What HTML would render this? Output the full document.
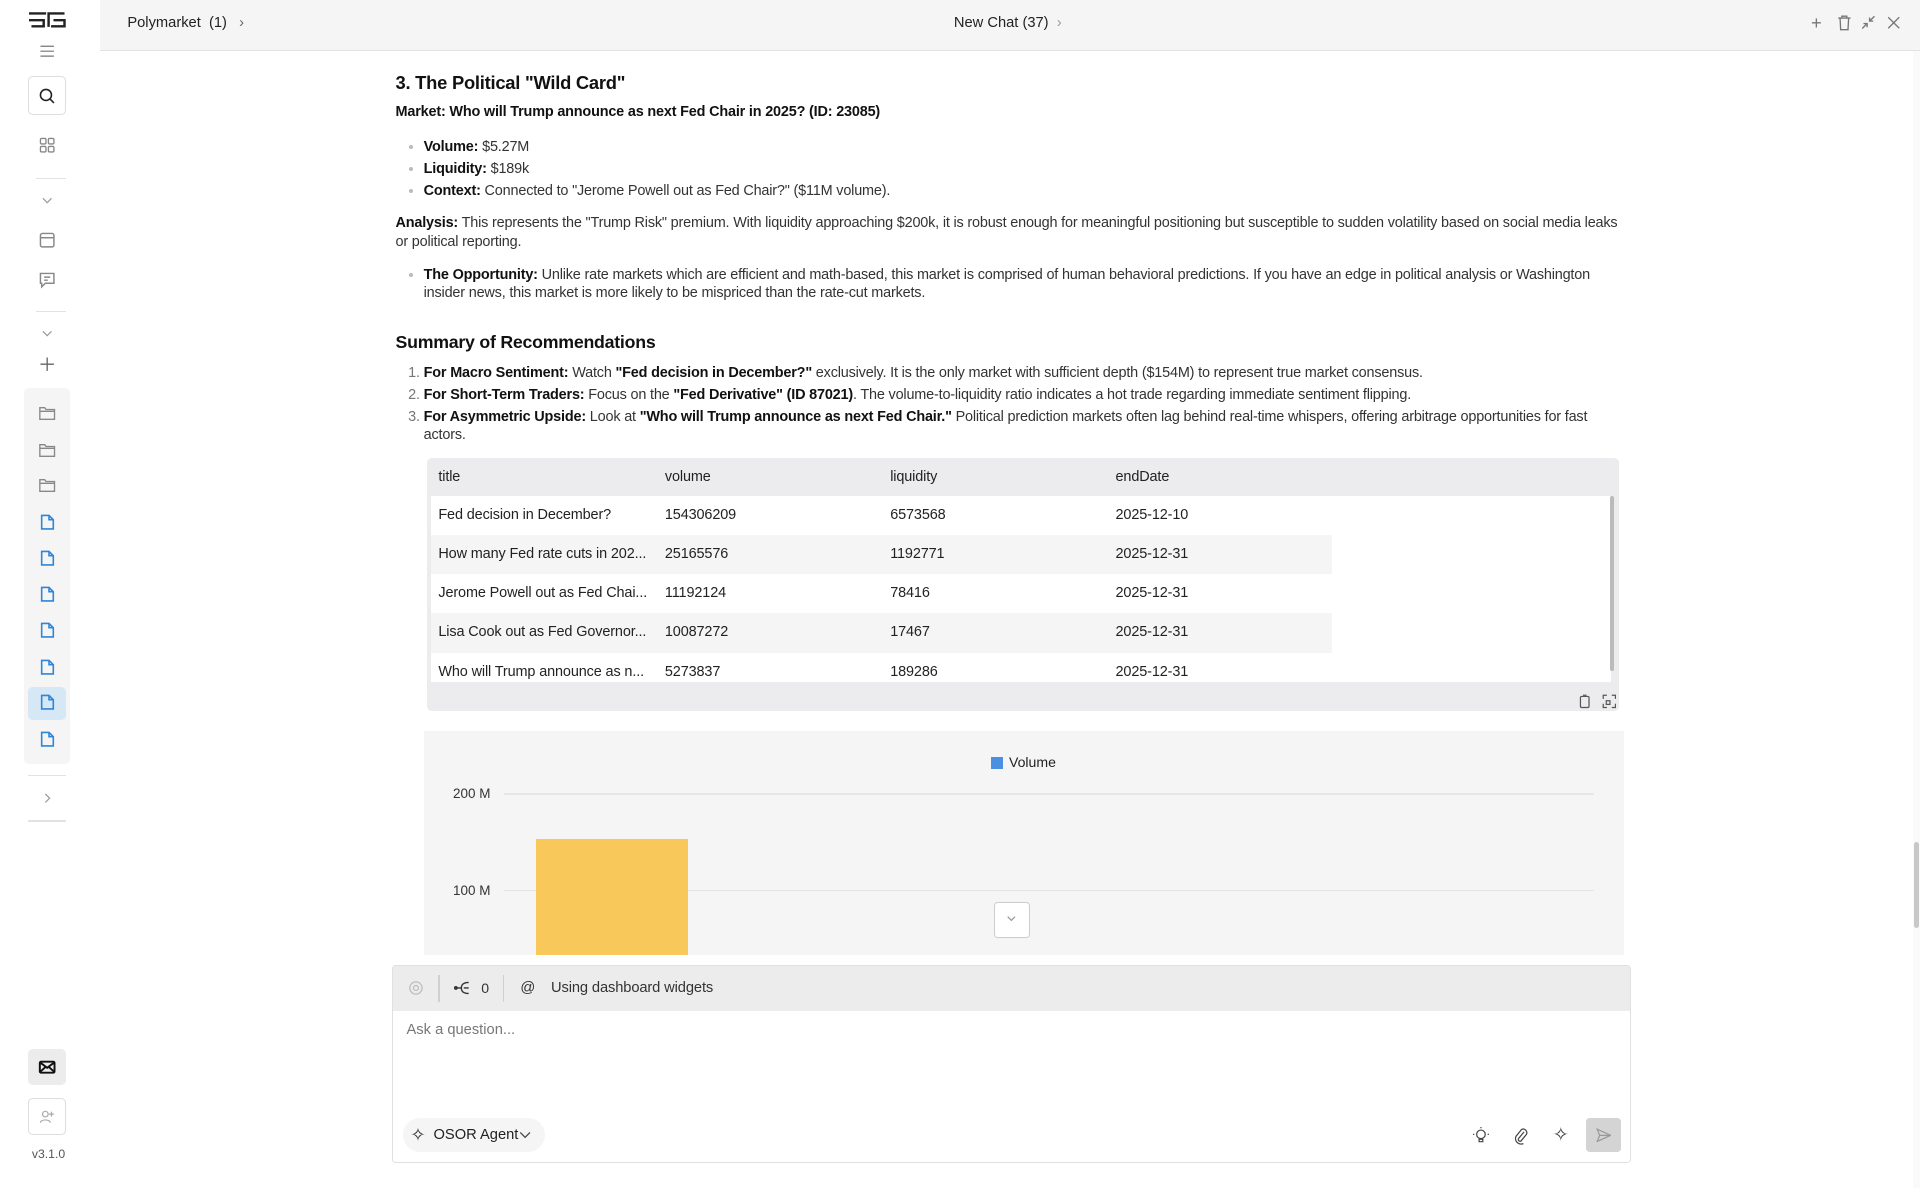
<!DOCTYPE html>
<html><head><meta charset="utf-8"><style>
*{box-sizing:border-box;margin:0;padding:0}
html,body{width:1920px;height:1188px;overflow:hidden;background:#fff}
#w{zoom:1.22449;width:1568px;height:970px;position:relative;font-family:"Liberation Sans",sans-serif;color:#222;font-size:12px}
.a{position:absolute}
.ic{position:absolute;left:31px;width:15px;height:15px}
svg{display:block}
.t{position:absolute;left:323px;width:1005px;line-height:15px;color:#333;font-size:11.8px;letter-spacing:-0.15px}
.t b{color:#111}
ul.t,ol.t{padding-left:23px}
ul.t li::marker{color:#bbb}
ol.t li::marker{color:#777}
.row{position:absolute;left:352px;height:32px;line-height:32px;font-size:11.8px;color:#222;letter-spacing:-0.1px}
.row span{position:absolute;top:0;white-space:nowrap}
</style></head><body><div id="w">
<div class="a" style="left:82px;top:0;width:1486px;height:42px;background:#f5f5f5;border-bottom:1px solid #e2e2e2"></div>
<div class="a" style="left:104px;top:12px;font-size:12px;color:#222">Polymarket &nbsp;(1) &nbsp;&nbsp;<span style="color:#666">›</span></div>
<div class="a" style="left:779px;top:12px;font-size:12px;color:#222">New Chat (37) &nbsp;<span style="color:#999">›</span></div>
<div class="a" style="left:1479px;top:10px;color:#777;font-size:15px">+</div>
<svg class="a" style="left:1500px;top:12px" width="12" height="13" viewBox="0 0 12 13" fill="none" stroke="#777" stroke-width="1.1"><path d="M1 2.5h10M4 2.5V1h4v1.5M2.5 2.5l.5 9.5h6l.5-9.5"/></svg>
<svg class="a" style="left:1520px;top:12px" width="12" height="12" viewBox="0 0 12 12" fill="none" stroke="#777" stroke-width="1.1"><path d="M1 11l4-4M2 7h3v3M11 1L7 5M7 2v3h3"/></svg>
<svg class="a" style="left:1541px;top:13px" width="11" height="11" viewBox="0 0 11 11" stroke="#777" stroke-width="1.1"><path d="M1 1l9 9M10 1l-9 9"/></svg>
<div class="a" style="left:1562px;top:42px;width:6px;height:928px;background:#fafafa"></div>
<div class="a" style="left:1563px;top:688px;width:4px;height:70px;background:#c8c8c8;border-radius:2px"></div>
<div class="a" style="left:24px;top:9px;"><svg width="30" height="15" viewBox="0 0 30 15" fill="none" stroke="#222" stroke-width="2"><path d="M0 2h14M0 7.5h12v5H2M16 13V2h13M20 7.5h9v5H18"/></svg></div>
<svg class="ic" style="top:34px" viewBox="0 0 15 15" stroke="#777" stroke-width="1"><path d="M2 3.5h11M2 7.5h11M2 11.5h11"/></svg>
<div class="a" style="left:23px;top:62px;width:31px;height:32px;border:1px solid #ddd;border-radius:4px"></div>
<svg class="ic" style="top:71px" viewBox="0 0 15 15" fill="none" stroke="#222" stroke-width="1.3"><circle cx="6.5" cy="6.5" r="4.5"/><path d="M10 10l3 3"/></svg>
<svg class="ic" style="top:111px" viewBox="0 0 15 15" fill="none" stroke="#888" stroke-width="1.1"><rect x="2" y="2" width="4.5" height="4.5" rx="1"/><rect x="8.5" y="2" width="4.5" height="4.5" rx="1"/><rect x="2" y="8.5" width="4.5" height="4.5" rx="1"/><rect x="8.5" y="8.5" width="4.5" height="4.5" rx="1"/></svg>
<div class="a" style="left:29px;top:145px;width:25px;height:1px;background:#e2e2e2"></div>
<svg class="ic" style="top:156px" viewBox="0 0 15 15" fill="none" stroke="#999" stroke-width="1"><path d="M4 6l3.5 3.5L11 6"/></svg>
<svg class="ic" style="top:189px" viewBox="0 0 15 15" fill="none" stroke="#888" stroke-width="1.2"><rect x="2" y="2" width="11" height="11" rx="1.5"/><path d="M2 5.5h11"/></svg>
<svg class="ic" style="top:221px" viewBox="0 0 15 15" fill="none" stroke="#888" stroke-width="1.2"><path d="M2 2h11v8H6l-3 3v-3H2z"/><path d="M5 5h5M5 7.5h3"/></svg>
<div class="a" style="left:29px;top:254px;width:25px;height:1px;background:#e2e2e2"></div>
<svg class="ic" style="top:265px" viewBox="0 0 15 15" fill="none" stroke="#999" stroke-width="1"><path d="M4 6l3.5 3.5L11 6"/></svg>
<svg class="ic" style="top:290px" viewBox="0 0 15 15" fill="none" stroke="#666" stroke-width="1.1"><path d="M7.5 2v11M2 7.5h11"/></svg>
<div class="a" style="left:20px;top:317px;width:37px;height:307px;background:#f5f5f6;border-radius:4px"></div>
<div class="a" style="left:23px;top:561px;width:31px;height:27px;background:#d6e7f5;border-radius:4px"></div>
<svg class="ic" style="top:330px" viewBox="0 0 15 15" fill="none" stroke="#888" stroke-width="1.1"><path d="M1.5 3h4l1 1.5h7v8h-12z M1.5 6h12"/></svg>
<svg class="ic" style="top:360px" viewBox="0 0 15 15" fill="none" stroke="#888" stroke-width="1.1"><path d="M1.5 3h4l1 1.5h7v8h-12z M1.5 6h12"/></svg>
<svg class="ic" style="top:389px" viewBox="0 0 15 15" fill="none" stroke="#888" stroke-width="1.1"><path d="M1.5 3h4l1 1.5h7v8h-12z M1.5 6h12"/></svg>
<svg class="ic" style="top:419px" viewBox="0 0 15 15" fill="none" stroke="#2f86d6" stroke-width="1.3"><path d="M3 2h6l3.5 3.5V13H3z M9 2v3.5h3.5"/></svg>
<svg class="ic" style="top:448px" viewBox="0 0 15 15" fill="none" stroke="#2f86d6" stroke-width="1.3"><path d="M3 2h6l3.5 3.5V13H3z M9 2v3.5h3.5"/></svg>
<svg class="ic" style="top:478px" viewBox="0 0 15 15" fill="none" stroke="#2f86d6" stroke-width="1.3"><path d="M3 2h6l3.5 3.5V13H3z M9 2v3.5h3.5"/></svg>
<svg class="ic" style="top:507px" viewBox="0 0 15 15" fill="none" stroke="#2f86d6" stroke-width="1.3"><path d="M3 2h6l3.5 3.5V13H3z M9 2v3.5h3.5"/></svg>
<svg class="ic" style="top:537px" viewBox="0 0 15 15" fill="none" stroke="#2f86d6" stroke-width="1.3"><path d="M3 2h6l3.5 3.5V13H3z M9 2v3.5h3.5"/></svg>
<svg class="ic" style="top:566px" viewBox="0 0 15 15" fill="none" stroke="#2f86d6" stroke-width="1.3"><path d="M3 2h6l3.5 3.5V13H3z M9 2v3.5h3.5"/></svg>
<svg class="ic" style="top:596px" viewBox="0 0 15 15" fill="none" stroke="#2f86d6" stroke-width="1.3"><path d="M3 2h6l3.5 3.5V13H3z M9 2v3.5h3.5"/></svg>
<div class="a" style="left:23px;top:633px;width:31px;height:1px;background:#e2e2e2"></div>
<svg class="ic" style="top:644px" viewBox="0 0 15 15" fill="none" stroke="#999" stroke-width="1"><path d="M6 4l3.5 3.5L6 11"/></svg>
<div class="a" style="left:23px;top:670px;width:31px;height:1px;background:#e2e2e2"></div>
<div class="a" style="left:23px;top:857px;width:31px;height:29px;background:#ececec;border-radius:4px"></div>
<svg class="ic" style="top:864px" viewBox="0 0 15 15" fill="none" stroke="#111" stroke-width="1.6"><rect x="1.5" y="3" width="12" height="9" rx="1"/><path d="M1.5 3.5l6 4.5 6-4.5M1.5 11.5l4.5-4M13.5 11.5l-4.5-4"/></svg>
<div class="a" style="left:23px;top:897px;width:31px;height:30px;border:1px solid #ddd;border-radius:4px"></div>
<svg class="ic" style="top:905px" viewBox="0 0 15 15" fill="none" stroke="#aaa" stroke-width="1"><circle cx="6" cy="5" r="2.3"/><path d="M2 12c0-3 8-3 8 0M11 3v4M9 5h4"/></svg>
<div class="a" style="left:26px;top:937px;font-size:10px;color:#555">v3.1.0</div>
<div class="a" style="left:323px;top:59px;font-size:15px;font-weight:bold;color:#111;letter-spacing:-0.2px">3. The Political "Wild Card"</div>
<div class="t" style="top:84px"><b>Market: Who will Trump announce as next Fed Chair in 2025? (ID: 23085)</b></div>
<ul class="t" style="top:111px;line-height:18px"><li><b>Volume:</b> $5.27M</li><li><b>Liquidity:</b> $189k</li><li><b>Context:</b> Connected to "Jerome Powell out as Fed Chair?" ($11M volume).</li></ul>
<div class="t" style="top:175px"><b>Analysis:</b> This represents the "Trump Risk" premium. With liquidity approaching $200k, it is robust enough for meaningful positioning but susceptible to sudden volatility based on social media leaks or political reporting.</div>
<ul class="t" style="top:217px"><li><b>The Opportunity:</b> Unlike rate markets which are efficient and math-based, this market is comprised of human behavioral predictions. If you have an edge in political analysis or Washington insider news, this market is more likely to be mispriced than the rate-cut markets.</li></ul>
<div class="a" style="left:323px;top:271px;font-size:14.5px;font-weight:bold;color:#111;letter-spacing:-0.2px">Summary of Recommendations</div>
<ol class="t" style="top:297px;line-height:15px"><li style="margin-bottom:3px"><b>For Macro Sentiment:</b> Watch <b>"Fed decision in December?"</b> exclusively. It is the only market with sufficient depth ($154M) to represent true market consensus.</li><li style="margin-bottom:3px"><b>For Short-Term Traders:</b> Focus on the <b>"Fed Derivative" (ID 87021)</b>. The volume-to-liquidity ratio indicates a hot trade regarding immediate sentiment flipping.</li><li><b>For Asymmetric Upside:</b> Look at <b>"Who will Trump announce as next Fed Chair."</b> Political prediction markets often lag behind real-time whispers, offering arbitrage opportunities for fast actors.</li></ol>
<div class="a" style="left:349px;top:374px;width:973px;height:207px;background:#ececee;border-radius:4px"></div>
<div class="a" style="left:352px;top:405px;width:964px;height:152px;background:#fff;overflow:hidden">
 <div class="a" style="left:0;top:32px;width:736px;height:32px;background:#f5f5f6"></div>
 <div class="a" style="left:0;top:96px;width:736px;height:32px;background:#f5f5f6"></div>
</div>
<div class="a" style="left:1315px;top:405px;width:3px;height:143px;background:#bbb;border-radius:2px"></div>
<div class="row" style="top:375px;height:31px;line-height:31px"><span style="left:6px">title</span><span style="left:191px">volume</span><span style="left:375px">liquidity</span><span style="left:559px">endDate</span></div>
<div class="row" style="top:405px"><span style="left:6px">Fed decision in December?</span><span style="left:191px">154306209</span><span style="left:375px">6573568</span><span style="left:559px">2025-12-10</span></div>
<div class="row" style="top:437px"><span style="left:6px">How many Fed rate cuts in 202...</span><span style="left:191px">25165576</span><span style="left:375px">1192771</span><span style="left:559px">2025-12-31</span></div>
<div class="row" style="top:469px"><span style="left:6px">Jerome Powell out as Fed Chai...</span><span style="left:191px">11192124</span><span style="left:375px">78416</span><span style="left:559px">2025-12-31</span></div>
<div class="row" style="top:501px"><span style="left:6px">Lisa Cook out as Fed Governor...</span><span style="left:191px">10087272</span><span style="left:375px">17467</span><span style="left:559px">2025-12-31</span></div>
<div class="row" style="top:533px"><span style="left:6px">Who will Trump announce as n...</span><span style="left:191px">5273837</span><span style="left:375px">189286</span><span style="left:559px">2025-12-31</span></div>
<svg class="a" style="left:1289px;top:567px" width="11" height="12" viewBox="0 0 11 12" fill="none" stroke="#555" stroke-width="1"><rect x="2" y="2" width="7" height="9" rx="1"/><path d="M4 1h3"/></svg>
<svg class="a" style="left:1308px;top:567px" width="12" height="12" viewBox="0 0 12 12" fill="none" stroke="#555" stroke-width="1"><path d="M1 4V1h3M8 1h3v3M11 8v3H8M4 11H1V8"/><rect x="3.5" y="5.5" width="3" height="3"/></svg>
<div class="a" style="left:346px;top:597px;width:980px;height:183px;background:#f5f5f5"></div>
<div class="a" style="left:809px;top:618px;width:10px;height:10px;background:#4a8fe0"></div>
<div class="a" style="left:824px;top:616px;font-size:11.5px;color:#222">Volume</div>
<div class="a" style="left:370px;top:642px;font-size:11px;color:#333">200 M</div>
<div class="a" style="left:370px;top:721px;font-size:11px;color:#333">100 M</div>
<div class="a" style="left:412px;top:648px;width:890px;height:1px;background:#e6e6e6"></div>
<div class="a" style="left:412px;top:727px;width:890px;height:1px;background:#e4e4e4"></div>
<div class="a" style="left:438px;top:685px;width:124px;height:95px;background:#f9c85b"></div>
<div class="a" style="left:812px;top:737px;width:29px;height:29px;background:#fff;border:1px solid #ccc;border-radius:3px"></div>
<svg class="a" style="left:820px;top:746px" width="12" height="10" viewBox="0 0 12 10" fill="none" stroke="#999"><path d="M3 3l3 3 3-3"/></svg>
<div class="a" style="left:320px;top:788px;width:1012px;height:162px;border:1px solid #e0e0e0;border-radius:3px;background:#fff;overflow:hidden">
 <div class="a" style="left:0;top:0;width:1012px;height:37px;background:#ececed"></div>
</div>
<svg class="a" style="left:333px;top:800px" width="13" height="13" viewBox="0 0 13 13" fill="none" stroke="#bbb"><circle cx="6.5" cy="6.5" r="2"/><circle cx="6.5" cy="6.5" r="5"/></svg>
<div class="a" style="left:358px;top:796px;width:1px;height:22px;background:#d0d0d0"></div>
<svg class="a" style="left:371px;top:800px" width="14" height="13" viewBox="0 0 14 13" fill="none" stroke="#333" stroke-width="1.1"><path d="M1 6.5h5M6 6.5C6 3 9 2 12 2M6 6.5c0 3.5 3 4.5 6 4.5M8 6.5h4"/><circle cx="1.5" cy="6.5" r="1"/></svg>
<div class="a" style="left:393px;top:800px;font-size:11.5px;color:#333">0</div>
<div class="a" style="left:411px;top:796px;width:1px;height:22px;background:#d0d0d0"></div>
<div class="a" style="left:425px;top:800px;font-size:12px;color:#333">@</div>
<div class="a" style="left:450px;top:800px;font-size:12px;color:#333;letter-spacing:-0.1px">Using dashboard widgets</div>
<div class="a" style="left:332px;top:835px;font-size:12px;color:#777">Ask a question...</div>
<div class="a" style="left:329px;top:913px;width:116px;height:28px;background:#f5f5f5;border-radius:14px"></div>
<div class="a" style="left:335px;top:918px;font-size:15px;color:#333">✧</div>
<div class="a" style="left:354px;top:920px;font-size:12px;color:#222">OSOR Agent</div>
<svg class="a" style="left:424px;top:923px" width="10" height="8" viewBox="0 0 10 8" fill="none" stroke="#444"><path d="M1 2l4 4 4-4"/></svg>
<svg class="a" style="left:1203px;top:920px" width="13" height="15" viewBox="0 0 13 15" fill="none" stroke="#444"><circle cx="6.5" cy="6" r="3.5"/><path d="M5 10h3v2H5z M6.5 0v1M1 6H0M13 6h-1"/></svg>
<svg class="a" style="left:1236px;top:920px" width="13" height="15" viewBox="0 0 13 15" fill="none" stroke="#444"><path d="M9 4L4.5 9.5a1.5 1.5 0 002 2L11 6a3 3 0 00-4-4L2.5 7.5a4.5 4.5 0 006 6"/></svg>
<div class="a" style="left:1268px;top:917px;font-size:16px;color:#444">✧</div>
<div class="a" style="left:1295px;top:913px;width:29px;height:28px;background:#d4d4d4;border-radius:3px"></div>
<svg class="a" style="left:1303px;top:921px" width="13" height="12" viewBox="0 0 13 12" fill="none" stroke="#999"><path d="M1 1l11 5-11 5 2-5z M3 6h9"/></svg>
</div></body></html>
